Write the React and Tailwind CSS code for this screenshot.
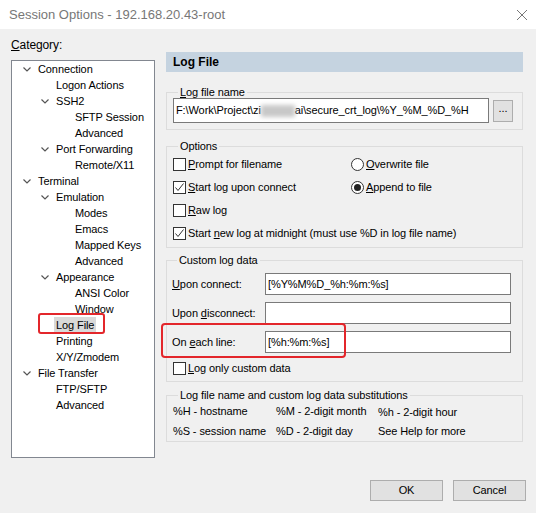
import React from "react";

const tree = [
  { label: "Connection", level: 0, open: true },
  { label: "Logon Actions", level: 1 },
  { label: "SSH2", level: 1, open: true },
  { label: "SFTP Session", level: 2 },
  { label: "Advanced", level: 2 },
  { label: "Port Forwarding", level: 1, open: true },
  { label: "Remote/X11", level: 2 },
  { label: "Terminal", level: 0, open: true },
  { label: "Emulation", level: 1, open: true },
  { label: "Modes", level: 2 },
  { label: "Emacs", level: 2 },
  { label: "Mapped Keys", level: 2 },
  { label: "Advanced", level: 2 },
  { label: "Appearance", level: 1, open: true },
  { label: "ANSI Color", level: 2 },
  { label: "Window", level: 2 },
  { label: "Log File", level: 1, selected: true },
  { label: "Printing", level: 1 },
  { label: "X/Y/Zmodem", level: 1 },
  { label: "File Transfer", level: 0, open: true },
  { label: "FTP/SFTP", level: 1 },
  { label: "Advanced", level: 1 },
];

const indent = ["pl-[26px]", "pl-[44px]", "pl-[63px]"];

const Chevron = () => (
  <svg width="8" height="5" viewBox="0 0 8 5" className="absolute -left-[15px] top-[6px]">
    <polyline points="0.5,0.5 4,4 7.5,0.5" fill="none" stroke="#555" strokeWidth="1.2" />
  </svg>
);

const Check = ({ checked }) => (
  <span className="w-[13px] h-[13px] border border-[#333] bg-white flex items-center justify-center shrink-0">
    {checked && (
      <svg width="11" height="11" viewBox="0 0 11 11">
        <polyline points="1.5,5.5 4,8.5 9.5,1.5" fill="none" stroke="#333" strokeWidth="1" />
      </svg>
    )}
  </span>
);

const Radio = ({ checked }) => (
  <span className="w-[13px] h-[13px] rounded-full border border-[#333] bg-white flex items-center justify-center shrink-0">
    {checked && <span className="w-[7px] h-[7px] rounded-full bg-[#222]" />}
  </span>
);

// group box: the caption sits on the top border via a negative margin
const Group = ({ title, className, children }) => (
  <div className={"border border-[#dcdcdc] " + className}>
    <div className="-mt-[8px] ml-[5px] px-[2px] w-fit bg-[#f0f0f0] leading-[14px]">{title}</div>
    {children}
  </div>
);

const Field = ({ value }) => (
  <div className="w-[246px] h-[22px] border border-[#7a7a7a] bg-white px-[2px] flex items-center">{value}</div>
);

export default function App() {
  return (
    <div
      className="w-[536px] h-[513px] bg-[#f0f0f0] text-[11px] tracking-[-0.1px] text-black flex flex-col overflow-hidden"
      style={{ fontFamily: '"Liberation Sans", Arial, sans-serif' }}
    >
      {/* title bar */}
      <div className="h-[29px] bg-white flex items-center justify-between pl-[9px] pr-[8px] shrink-0 tracking-normal">
        <span className="text-[13px] text-[#777]">Session Options - 192.168.20.43-root</span>
        <svg width="12" height="12" viewBox="0 0 12 12">
          <path d="M1 1 L11 11 M11 1 L1 11" stroke="#777" strokeWidth="1" />
        </svg>
      </div>

      <div className="flex gap-[11px] pl-[11px] pt-[8px]">
        {/* left: category tree */}
        <div className="w-[144px] flex flex-col">
          <div className="h-[16px] leading-[16px] text-[12px]">
            <u>C</u>ategory:
          </div>
          <div className="mt-[7px] h-[398px] border border-[#828790] bg-white">
            {tree.map((t, i) => (
              <div key={i} className={"h-[16px] leading-[16px] " + indent[t.level]}>
                <span className="relative inline-block">
                  {t.open && <Chevron />}
                  {t.selected ? (
                    <span className="relative bg-[#d9d9d9] px-[2px] -ml-[2px] inline-block">
                      {t.label}
                      <span className="absolute -left-[16px] -top-[4px] w-[67px] h-[21px] border-2 border-[#e3262b] rounded-[3px]" />
                    </span>
                  ) : (
                    t.label
                  )}
                </span>
              </div>
            ))}
          </div>
        </div>

        {/* right panel */}
        <div className="w-[357px] flex flex-col">
          <div className="mt-[15px] h-[20px] bg-[#c5d3e0] pl-[7px] font-bold leading-[20px] text-[12px] tracking-normal">Log File</div>

          <Group title={<><u>L</u>og file name</>} className="mt-[20px] px-[6px] pb-[6px]">
            <div className="flex items-center gap-[4px] -mt-[1px]">
              <div className="w-[316px] h-[25px] border border-[#7a7a7a] bg-white px-[2px] flex items-center whitespace-nowrap overflow-hidden">
                F:\Work\Project\zi
                <span className="inline-block w-[34px] h-[12px] bg-[#c8c8c8] blur-[2px]" />
                ai\secure_crt_log\%Y_%M_%D_%H
              </div>
              <div className="w-[20px] h-[22px] border border-[#adadad] bg-[#e1e1e1] flex items-center justify-center leading-none pb-[4px]">
                ...
              </div>
            </div>
          </Group>

          <Group title="Options" className="mt-[16px] px-[6px] pb-[2px]">
            <div className="grid grid-cols-[178px_1fr]">
              <div className="h-[23px] flex items-center gap-[2px]">
                <Check />
                <span><u>P</u>rompt for filename</span>
              </div>
              <div className="h-[23px] flex items-center gap-[2px]">
                <Radio />
                <span><u>O</u>verwrite file</span>
              </div>
              <div className="h-[23px] flex items-center gap-[2px]">
                <Check checked />
                <span><u>S</u>tart log upon connect</span>
              </div>
              <div className="h-[23px] flex items-center gap-[2px]">
                <Radio checked />
                <span><u>A</u>ppend to file</span>
              </div>
              <div className="h-[23px] flex items-center gap-[2px] col-span-2">
                <Check />
                <span><u>R</u>aw log</span>
              </div>
              <div className="h-[23px] flex items-center gap-[2px] col-span-2">
                <Check checked />
                <span>Start <u>n</u>ew log at midnight (must use %D in log file name)</span>
              </div>
            </div>
          </Group>

          <Group title="Custom log data" className="mt-[12px] pl-[5px] pr-[11px] pb-[2px]">
            <div className="flex flex-col gap-[7px] mt-[6px]">
              <div className="flex items-center justify-between">
                <span><u>U</u>pon connect:</span>
                <Field value="[%Y%M%D_%h:%m:%s]" />
              </div>
              <div className="flex items-center justify-between">
                <span>Upon <u>d</u>isconnect:</span>
                <Field value="" />
              </div>
              <div className="relative flex items-center justify-between">
                <span>On <u>e</u>ach line:</span>
                <Field value="[%h:%m:%s]" />
                <span className="absolute -left-[11px] -top-[8px] w-[185px] h-[35px] border-2 border-[#e3262b] rounded-[4px]" />
              </div>
            </div>
            <div className="h-[22px] mt-[4px] flex items-center gap-[2px] pl-[1px]">
              <Check />
              <span><u>L</u>og only custom data</span>
            </div>
          </Group>

          <Group title="Log file name and custom log data substitutions" className="mt-[13px] px-[6px]">
            <div className="grid grid-cols-[103px_102px_1fr] -mt-[1px] whitespace-nowrap">
              <div className="h-[20px] leading-[20px]">%H - hostname</div>
              <div className="h-[20px] leading-[20px]">%M - 2-digit month</div>
              <div className="h-[20px] leading-[20px] pt-[1px]">%h - 2-digit hour</div>
              <div className="h-[20px] leading-[20px]">%S - session name</div>
              <div className="h-[20px] leading-[20px]">%D - 2-digit day</div>
              <div className="h-[20px] leading-[20px]">See Help for more</div>
            </div>
          </Group>
        </div>
      </div>

      <div className="flex justify-end gap-[10px] pr-[10px] mt-auto mb-[12px]">
        <div className="w-[73px] h-[21px] border border-[#adadad] bg-[#e1e1e1] flex items-center justify-center">OK</div>
        <div className="w-[73px] h-[21px] border border-[#adadad] bg-[#e1e1e1] flex items-center justify-center">Cancel</div>
      </div>
    </div>
  );
}
